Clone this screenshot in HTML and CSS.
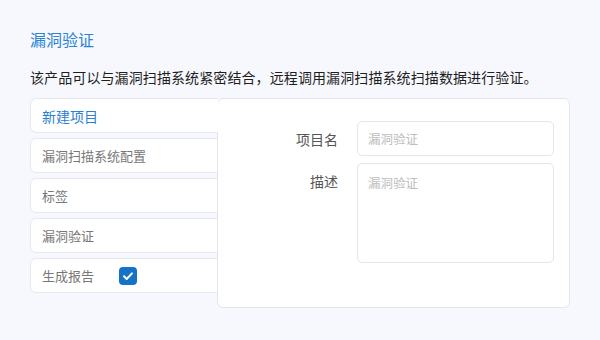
FILE: index.html
```html
<!DOCTYPE html>
<html lang="zh-CN">
<head>
<meta charset="utf-8">
<title>漏洞验证</title>
<link rel="stylesheet" href="styles.css">
</head>
<body>
<div class="page">
  <h1 class="title">漏洞验证</h1>
  <p class="desc">该产品可以与漏洞扫描系统紧密结合，远程调用漏洞扫描系统扫描数据进行验证。</p>
  <div class="workspace">
    <div class="tabs">
      <div class="tab tab-active">新建项目</div>
      <div class="tab">漏洞扫描系统配置</div>
      <div class="tab">标签</div>
      <div class="tab">漏洞验证</div>
      <div class="tab">生成报告
        <span class="checkbox">
          <svg width="18" height="18" viewBox="0 0 18 18"><path d="M5 9.3 L7.7 12 L13 6.4" fill="none" stroke="#fff" stroke-width="2" stroke-linecap="round" stroke-linejoin="round"/></svg>
        </span>
      </div>
    </div>
    <div class="panel">
      <div class="form">
        <label class="label label-mid">项目名</label>
        <div class="input">漏洞验证</div>
        <label class="label label-top">描述</label>
        <div class="input textarea">漏洞验证</div>
      </div>
    </div>
  </div>
</div>
</body>
</html>
```
FILE: styles.css
```css
html, body {
  margin: 0;
  padding: 0;
  background: #f7f8fd;
  font-family: "Noto Sans CJK SC", "Noto Sans", sans-serif;
}
.page {
  padding: 28px 30px 0 30px;
  width: 540px;
}
.title {
  margin: 0;
  font-size: 16px;
  line-height: 22px;
  font-weight: 400;
  color: #2a84d6;
}
.desc {
  margin: 17px 0 0 0;
  font-size: 14px;
  line-height: 20px;
  letter-spacing: 0.1px;
  color: #1e1e1e;
}
.workspace {
  margin-top: 11px;
  display: flex;
  align-items: flex-start;
}
.tabs {
  width: 188px;
  flex-shrink: 0;
  display: flex;
  flex-direction: column;
  gap: 5px;
}
.tab {
  box-sizing: border-box;
  width: 200px;
  height: 35px;
  border: 1px solid #e5e8f0;
  border-radius: 6px;
  background: #fff;
  padding-left: 11px;
  display: flex;
  align-items: center;
  font-size: 13px;
  color: #777;
}
.tab-active {
  position: relative;
  z-index: 2;
  width: 188px;
  border-right: none;
  border-radius: 6px 0 0 6px;
  font-size: 14px;
  color: #2a80d2;
}
.checkbox {
  margin-left: 25px;
  width: 18px;
  height: 18px;
  border-radius: 4px;
  background: #1472c8;
  display: flex;
}
.panel {
  position: relative;
  z-index: 1;
  box-sizing: border-box;
  margin-left: -1px;
  width: 353px;
  height: 210px;
  background: #fff;
  border: 1px solid #e3e6ee;
  border-radius: 6px;
  padding: 22px 15px 0 0;
}
.form {
  display: grid;
  grid-template-columns: 1fr 197px;
  column-gap: 19px;
  row-gap: 7px;
}
.label {
  text-align: right;
  font-size: 14px;
  color: #555;
  line-height: 20px;
}
.label-mid {
  align-self: center;
}
.label-top {
  padding-top: 8px;
}
.input {
  box-sizing: border-box;
  height: 35px;
  border: 1px solid #e3e6ee;
  border-radius: 5px;
  padding-left: 10px;
  display: flex;
  align-items: center;
  font-size: 12.5px;
  color: #bdbdbd;
}
.textarea {
  height: 100px;
  align-items: flex-start;
  padding-top: 9px;
}
```
